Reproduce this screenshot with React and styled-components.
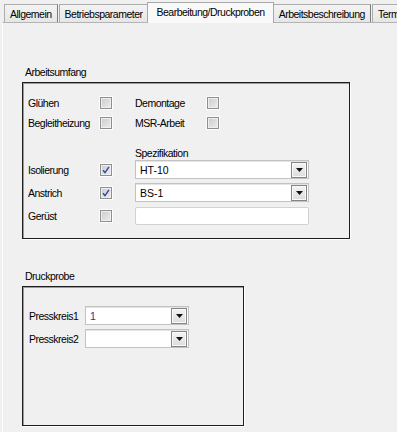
import React from 'react';
import styled, {createGlobalStyle} from 'styled-components';

const GlobalStyle = createGlobalStyle`
	html, body {
		margin: 0;
		padding: 0;
		background: #f0f0f0;
	}
	body {
		font-family: "Liberation Sans", Arial, sans-serif;
		font-size: 10.5px;
		letter-spacing: -0.5px;
		color: #000;
	}
`;

const Window = styled.div`
	width: 397px;
	height: 432px;
	overflow: hidden;
	background: #f0f0f0;
	display: flex;
	flex-direction: column;
`;

const TabStrip = styled.div`
	display: flex;
	align-items: flex-end;
	height: 22px;
	padding-left: 4px;
	flex-shrink: 0;
	white-space: nowrap;
`;

const Tab = styled.div`
	box-sizing: border-box;
	height: 18px;
	line-height: 16px;
	padding: 1px 5px 0;
	border: 1px solid #acacac;
	border-bottom: none;
	border-right-color: #7c7c7c;
	background: linear-gradient(#f3f3f3, #e6e6e6);
	margin-right: 1px;

	&.selected {
		position: relative;
		z-index: 1;
		height: 21px;
		line-height: 16px;
		padding: 1px 8px 0;
		margin: 0 -1px -1px -2px;
		background: #f9f9f9;
		border-color: #a8a8a8;
	}
`;

const TabPage = styled.div`
	flex: 1;
	margin-left: 2px;
	border-top: 1px solid #b4b4b4;
	border-left: 1px solid #fdfdfd;
	padding-left: 19px;
	background: #f0f0f0;
`;

const GroupLabel = styled.div`
	height: 12px;
	line-height: 12px;
	padding-left: 3px;
	margin-top: ${p => p.$top}px;
	margin-bottom: 4px;
`;

const GroupBox = styled.div`
	box-sizing: border-box;
	width: ${p => p.$w}px;
	height: ${p => p.$h}px;
	border: 1px solid #1e1e1e;
	box-shadow: inset 1px 1px 0 #9a9a9a, 1px 1px 0 #ffffff;
	padding: ${p => p.$pad};
`;

const Row = styled.div`
	display: grid;
	grid-template-columns: ${p => p.$cols};
	align-items: center;
	height: ${p => p.$h}px;
	margin-top: ${p => p.$top}px;
`;

const Label = styled.span`
	grid-column: ${p => p.$col || 'auto'};
	line-height: 12px;
`;

const Box = styled.span`
	box-sizing: border-box;
	width: 12px;
	height: 12px;
	border: 1px solid #8e8f8f;
	background: linear-gradient(135deg, #cbcbcb, #ededed);
	box-shadow: inset 0 0 0 1px #efefef, 0 0 0 1px #fdfdfd;
	display: flex;
	align-items: center;
	justify-content: center;
	grid-column: ${p => p.$col || 'auto'};
`;

const Combo = styled.div`
	box-sizing: border-box;
	grid-column: ${p => p.$span || 'auto'};
	height: 19px;
	border: 1px solid #c2c2c2;
	box-shadow: inset 0 1px 0 #e4e4e4;
	background: #fff;
	display: flex;
	align-items: center;
	padding: 0 1px 0 4px;
	color: ${p => p.$blue ? '#1b3a8c' : '#000'};
`;

const ComboText = styled.span`
	flex: 1;
	letter-spacing: 0;
`;

const DropButton = styled.span`
	box-sizing: border-box;
	width: 16px;
	height: 16px;
	border: 1px solid #858585;
	background: linear-gradient(#f4f4f4, #dcdcdc);
	box-shadow: inset 0 0 0 1px #fafafa;
	display: flex;
	align-items: center;
	justify-content: center;
`;

const TextBox = styled.div`
	box-sizing: border-box;
	grid-column: ${p => p.$span || 'auto'};
	height: 18px;
	border: 1px solid #d2d2d2;
	border-radius: 2px;
	background: #fff;
`;

const Arrow = () => (
	<svg width="7" height="4" viewBox="0 0 7 4">
		<path d="M0 0H7L3.5 4Z" fill="#111"/>
	</svg>
);

const Check = ({checked}) => (
	<Box>
		{checked && (
			<svg width="8" height="8" viewBox="0 0 8 8">
				<path d="M1 4.2L3 6.6L7 0.8" fill="none" stroke="#2c4a9c" strokeWidth="1.4"/>
			</svg>
		)}
	</Box>
);

const ComboBox = ({value, span, blue}) => (
	<Combo $span={span} $blue={blue}>
		<ComboText>{value}</ComboText>
		<DropButton><Arrow/></DropButton>
	</Combo>
);

const COLS = '72px 13px 22px 72px 13px 89px';
const PRESS_COLS = '56px 104px';

const tabs = ['Allgemein', 'Betriebsparameter', 'Bearbeitung/Druckproben', 'Arbeitsbeschreibung', 'Termine'];

const App = () => {
	return (
		<Window>
			<GlobalStyle/>
			<TabStrip>
				{tabs.map((t, i) => (
					<Tab key={t} className={i === 2 ? 'selected' : ''}>{t}</Tab>
				))}
			</TabStrip>
			<TabPage>
				<GroupLabel $top={43}>Arbeitsumfang</GroupLabel>
				<GroupBox $w={328} $h={157} $pad="0 0 0 5px">
					<Row $cols={COLS} $h={16} $top={12}>
						<Label>Glühen</Label>
						<Check/>
						<span/>
						<Label>Demontage</Label>
						<Check/>
					</Row>
					<Row $cols={COLS} $h={16} $top={4}>
						<Label>Begleitheizung</Label>
						<Check/>
						<span/>
						<Label>MSR-Arbeit</Label>
						<Check/>
					</Row>
					<Row $cols={COLS} $h={13} $top={15}>
						<Label $col="4 / span 3">Spezifikation</Label>
					</Row>
					<Row $cols={COLS} $h={19} $top={1}>
						<Label>Isolierung</Label>
						<Check checked/>
						<span/>
						<ComboBox value="HT-10" span="4 / span 3"/>
					</Row>
					<Row $cols={COLS} $h={19} $top={4}>
						<Label>Anstrich</Label>
						<Check checked/>
						<span/>
						<ComboBox value="BS-1" span="4 / span 3"/>
					</Row>
					<Row $cols={COLS} $h={18} $top={5}>
						<Label>Gerüst</Label>
						<Check/>
						<span/>
						<TextBox $span="4 / span 3"/>
					</Row>
				</GroupBox>

				<GroupLabel $top={31}>Druckprobe</GroupLabel>
				<GroupBox $w={222} $h={140} $pad="0 0 0 6px">
					<Row $cols={PRESS_COLS} $h={19} $top={19}>
						<Label>Presskreis1</Label>
						<ComboBox value="1" blue/>
					</Row>
					<Row $cols={PRESS_COLS} $h={19} $top={4}>
						<Label>Presskreis2</Label>
						<ComboBox value=""/>
					</Row>
				</GroupBox>
			</TabPage>
		</Window>
	);
};

export default App;
